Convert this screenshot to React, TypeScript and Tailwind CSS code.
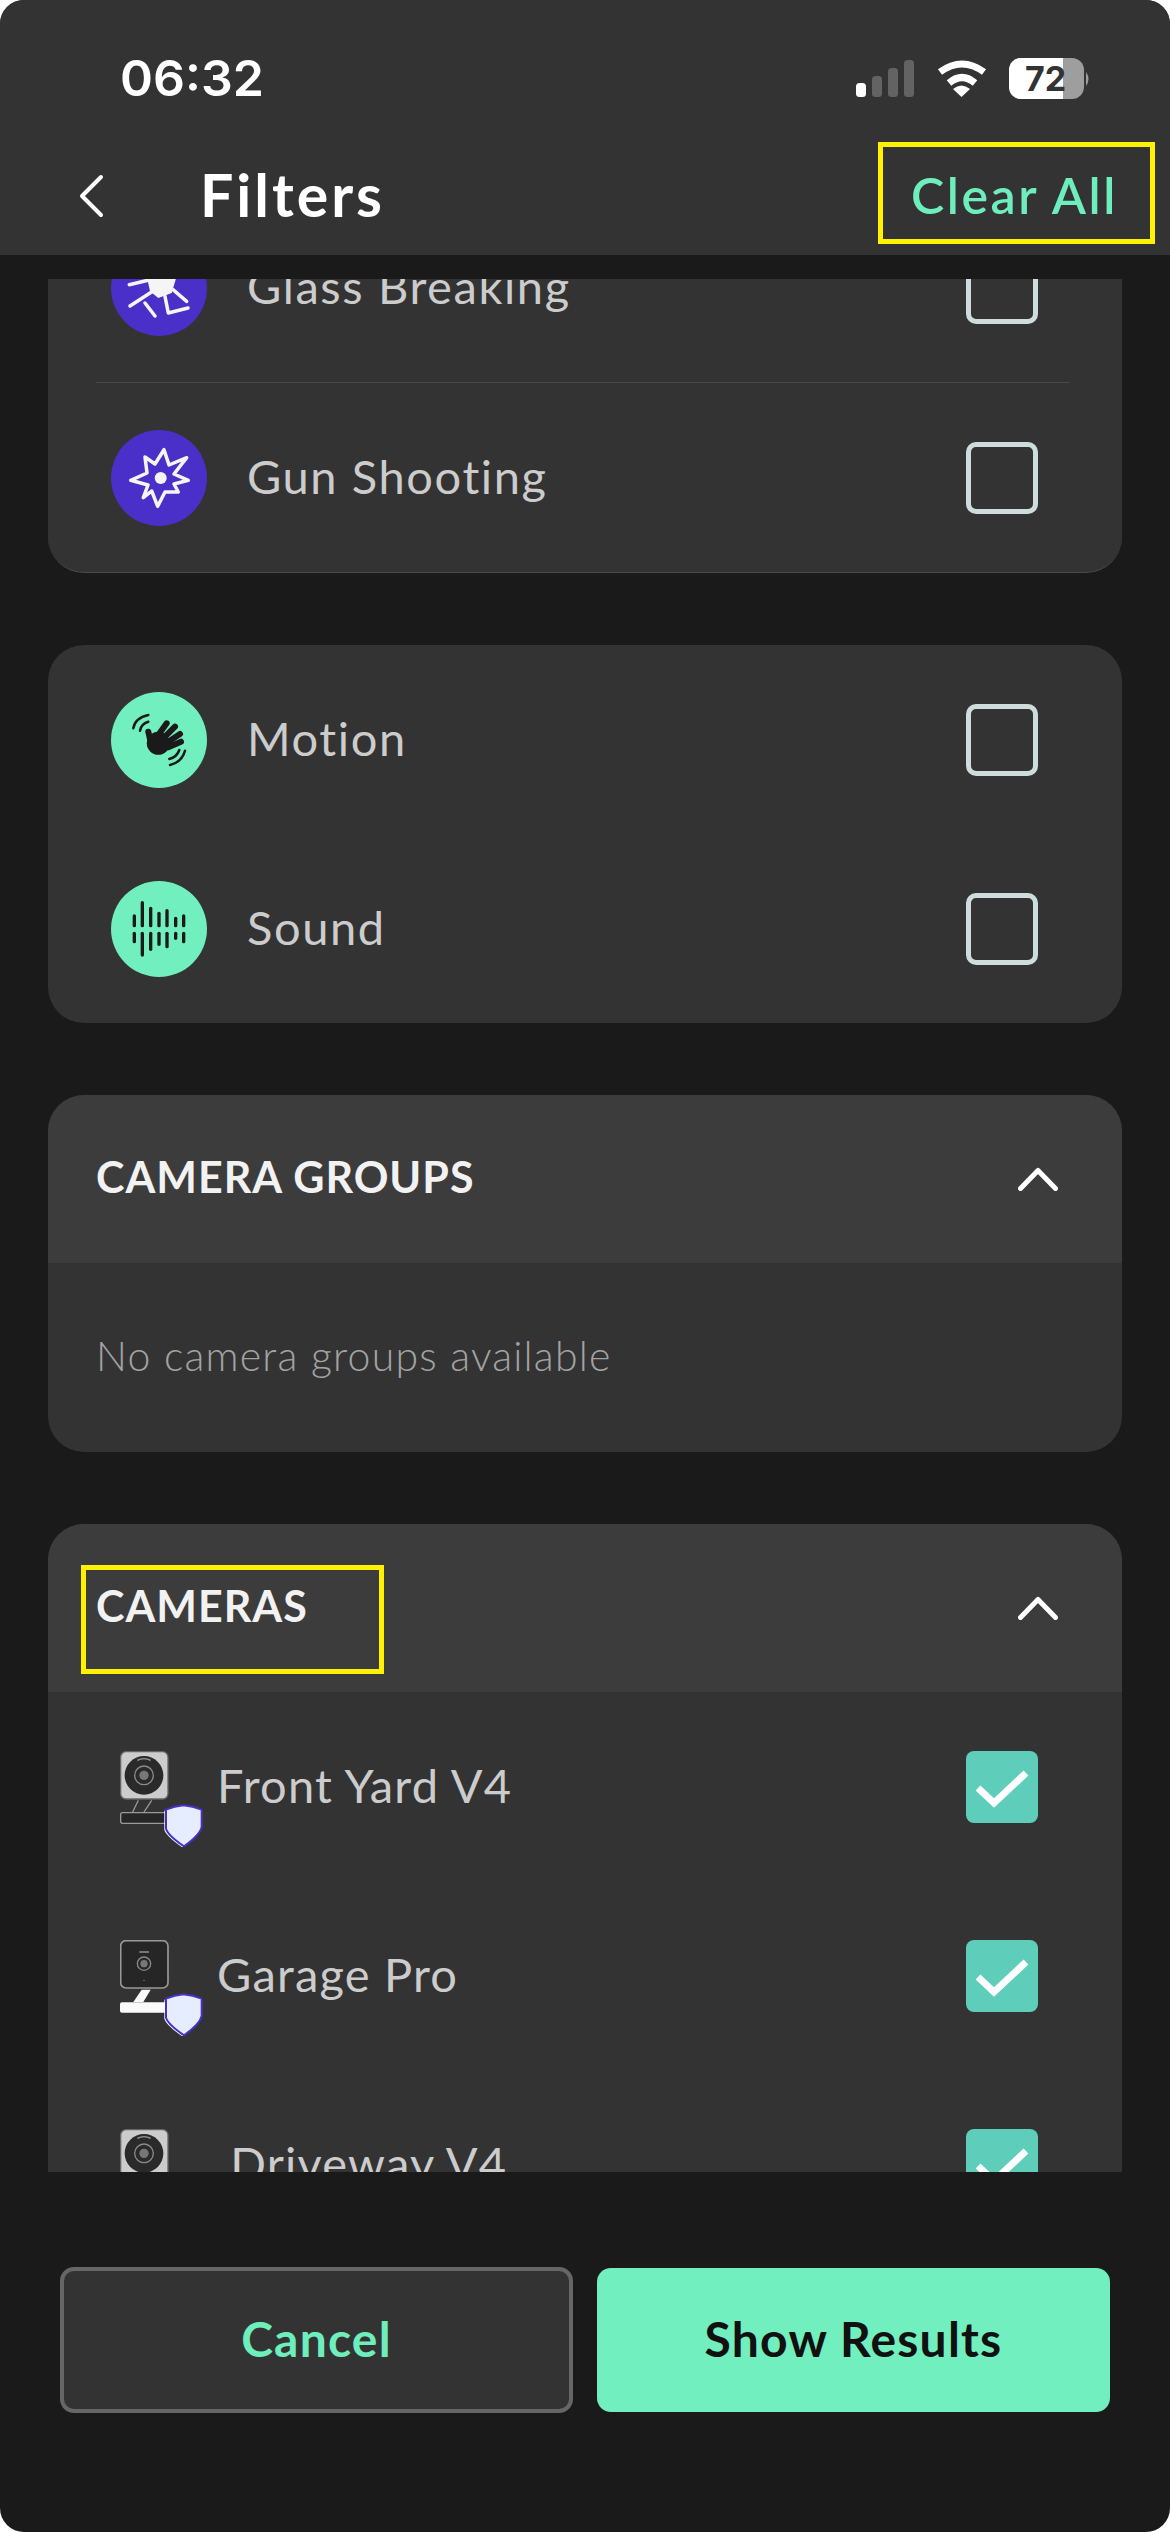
import type { ReactNode } from 'react';

const SHIELD = 'M190 163 Q218 165 245 176 L245 228 Q240 252 192 286 Q143 252 138 233 L138 176 Q164 165 190 163 Z';

const SOUND_BARS = [
  { x: 70, top: 105, bottom: 182 },
  { x: 94, top: 65, bottom: 222 },
  { x: 119, top: 82, bottom: 205 },
  { x: 144, top: 97, bottom: 190 },
  { x: 168, top: 89, bottom: 197 },
  { x: 194, top: 112, bottom: 172 },
  { x: 218, top: 105, bottom: 182 },
];

function StatusIcons() {
  return (
    <svg width="235" height="41" viewBox="0 0 235 41" className="shrink-0">
      <rect x="0" y="25" width="10" height="14" rx="3.5" fill="#fff" />
      <rect x="16" y="18" width="10" height="21" rx="3.5" fill="#636363" />
      <rect x="32" y="10" width="10" height="29" rx="3.5" fill="#636363" />
      <rect x="48" y="2" width="10" height="37" rx="3.5" fill="#636363" />
      <path d="M84 14 Q106 -2 128 14" stroke="#fff" strokeWidth="7" fill="none" />
      <path d="M93 25 Q106 14 119 25" stroke="#fff" strokeWidth="7" fill="none" />
      <path d="M97 31 Q105.5 24 114 31 L105.5 39 Z" fill="#fff" />
      <clipPath id="battery">
        <rect x="153" y="0" width="75" height="41" rx="12" />
      </clipPath>
      <g clipPath="url(#battery)">
        <rect x="153" y="0" width="75" height="41" fill="#9e9e9e" />
        <rect x="153" y="0" width="54" height="41" fill="#fff" />
      </g>
      <path d="M230 14 Q235 21 230 28 Z" fill="#9e9e9e" />
      <text x="189.5" y="33" textAnchor="middle" fontFamily="Inter, sans-serif" fontWeight="700" fontSize="34" fill="#333">
        72
      </text>
    </svg>
  );
}

function IconCircle({ color, children }: { color: string; children: ReactNode }) {
  return (
    <span className={`size-[96px] shrink-0 rounded-full ${color}`}>
      <svg viewBox="0 0 96 96" className="size-[96px]">
        {children}
      </svg>
    </span>
  );
}

function GlassIcon() {
  return (
    <IconCircle color="bg-[#4a30c8]">
      <g stroke="#f5f5f5" strokeWidth="3.5" strokeLinecap="round" strokeLinejoin="round" fill="none">
        <path d="M19 66 L44 49.7" />
        <path d="M34 63 L44 76" />
        <path d="M54 56.3 L57.3 73 L77 68" />
        <path d="M62 49.7 L75.7 61.3" />
        <path d="M18.3 44.7 L39 39.7" />
      </g>
      <path d="M35.7 36 L65.7 36 L60.7 53 L47.3 58 L39 51.3 Z" fill="#f5f5f5" />
    </IconCircle>
  );
}

function GunIcon() {
  return (
    <IconCircle color="bg-[#4a30c8]">
      <path
        d="M53 19.7 L58 35 L75.7 27.7 L63 44 L77.3 50.3 L63 54 L67.3 62 L54 62 L46.7 76.3 L40.7 61 L32.3 67.7 L37 55 L19.7 50.3 L36 43 L34 27 L44 34 Z"
        fill="none"
        stroke="#f5f5f5"
        strokeWidth="3.5"
        strokeLinejoin="round"
      />
      <circle cx="49.7" cy="48" r="6" fill="#f5f5f5" />
    </IconCircle>
  );
}

function MotionIcon() {
  return (
    <IconCircle color="bg-[#72efbf]">
      <g stroke="#1a1a1a" strokeLinecap="round" fill="none">
        <g strokeWidth="6">
          <path d="M37.3 39.7 L40 51.3" />
          <path d="M47.3 43 L55.7 31.3" />
          <path d="M52.3 46.3 L64 34.7" />
          <path d="M57.3 49.7 L69 42" />
          <path d="M57.3 55.3 L70 49.7" />
        </g>
        <g strokeWidth="2.5">
          <path d="M22.3 36.3 Q24 26 37.3 23" />
          <path d="M29 38.7 Q30 32 37.3 29.7" />
          <path d="M59 73 Q71 70 74 58.7" />
          <path d="M58.3 67 Q66 65 68.3 58" />
        </g>
      </g>
      <circle cx="47.3" cy="51.3" r="11.5" fill="#1a1a1a" />
    </IconCircle>
  );
}

function SoundIcon() {
  return (
    <span className="size-[96px] shrink-0 rounded-full bg-[#72efbf]">
      <svg viewBox="0 0 288 288" className="size-[96px]">
        <g stroke="#1a1a1a" strokeWidth="10" strokeLinecap="round">
          {SOUND_BARS.map((bar) => (
            <g key={bar.x}>
              <path d={`M${bar.x} ${bar.top} V134`} />
              <path d={`M${bar.x} 157 V${bar.bottom}`} />
            </g>
          ))}
        </g>
      </svg>
    </span>
  );
}

function Shield() {
  return (
    <>
      <path d={SHIELD} transform="translate(-5 3)" fill="#fff" />
      <path d={SHIELD} fill="#e6edff" stroke="#4530c8" strokeWidth="6" strokeLinejoin="round" />
    </>
  );
}

function CameraV4() {
  return (
    <svg viewBox="0 0 252 288" className="mt-[24px] h-[96px] w-[84px] shrink-0">
      <rect x="2" y="2" width="142" height="142" rx="16" fill="#cccccc" stroke="#666" strokeWidth="4" />
      <circle cx="72" cy="73" r="58" fill="#2a2a2a" />
      <circle cx="72" cy="73" r="28" fill="none" stroke="#8a8a8a" strokeWidth="4" />
      <circle cx="72" cy="73" r="14" fill="#777" />
      <path d="M52 28 Q72 18 92 28" fill="none" stroke="#999" strokeWidth="4" />
      <path d="M55 148 L38 183 M95 148 L72 183" stroke="#999" strokeWidth="4" />
      <rect x="2" y="185" width="140" height="32" rx="6" fill="#262626" stroke="#999" strokeWidth="4" />
      <Shield />
    </svg>
  );
}

function CameraPro() {
  return (
    <svg viewBox="0 0 252 288" className="mt-[24px] h-[96px] w-[84px] shrink-0">
      <rect x="2" y="2" width="142" height="142" rx="16" fill="#262626" stroke="#999" strokeWidth="5" />
      <path d="M58 36 H87" stroke="#888" strokeWidth="5" />
      <circle cx="72" cy="71" r="20" fill="none" stroke="#888" strokeWidth="4" />
      <circle cx="72" cy="71" r="11" fill="#777" />
      <circle cx="72" cy="121" r="2" fill="#888" />
      <path d="M65 149 H92 L70 186 H40 Z" fill="#fafafa" />
      <rect x="0" y="187" width="140" height="31" rx="6" fill="#fafafa" />
      <Shield />
    </svg>
  );
}

function Checkbox({ checked }: { checked?: boolean }) {
  if (checked) {
    return (
      <span className="size-[72px] shrink-0 rounded-[8px] bg-[#5ecdb9]">
        <svg viewBox="0 0 72 72" className="size-[72px]">
          <path d="M12 37 L28 52 L60 22" fill="none" stroke="#fff" strokeWidth="7" />
        </svg>
      </span>
    );
  }
  return <span className="size-[72px] shrink-0 rounded-[10px] border-[5px] border-[#cfdcdc]" />;
}

function FilterRow({ icon, label }: { icon: ReactNode; label: string }) {
  return (
    <div className="flex h-[189px] items-center pl-[63px] pr-[84px]">
      {icon}
      <span className="ml-[40px] flex-1 pb-[3px] text-[47px] tracking-[1.6px] text-[#cccccc]">{label}</span>
      <Checkbox />
    </div>
  );
}

function CameraRow({ icon, label }: { icon: ReactNode; label: string }) {
  return (
    <div className="flex h-[189px] items-center pl-[72px] pr-[84px]">
      {icon}
      <span className="ml-[13px] flex-1 whitespace-pre pb-[3px] text-[47px] tracking-[1.2px] text-[#cccccc]">{label}</span>
      <Checkbox checked />
    </div>
  );
}

function SectionHeader({ title, children }: { title: string; children?: ReactNode }) {
  return (
    <div className="relative flex h-[168px] items-center justify-between bg-[#3c3c3c] pl-[48px] pr-[64px]">
      <span className="pb-[3px] text-[43px] font-bold tracking-[1px] text-[#f2f2f2]">{title}</span>
      <svg width="40" height="24" viewBox="0 0 40 24" fill="none">
        <path d="M2.5 21.5 L20 3.5 L37.5 21.5" stroke="#fff" strokeWidth="5" strokeLinecap="round" strokeLinejoin="round" />
      </svg>
      {children}
    </div>
  );
}

export default function App() {
  return (
    <div className="relative flex h-[2532px] w-[1170px] flex-col overflow-hidden rounded-[24px] bg-[#1a1a1a] font-['Lato',sans-serif]">
      <header className="h-[255px] shrink-0 bg-[#333333]">
        <div className="flex h-[156px] items-center justify-between pl-[120px] pr-[79px]">
          <span className="font-['Inter',sans-serif] text-[50px] font-semibold text-white">06:32</span>
          <StatusIcons />
        </div>
        <div className="flex h-[82px] items-center pb-[3px] pl-[78px] pr-[52px]">
          <svg width="26" height="44" viewBox="0 0 26 44" fill="none">
            <path d="M23 3 L4 22 L23 41" stroke="#fff" strokeWidth="4" strokeLinecap="round" strokeLinejoin="round" />
          </svg>
          <h1 className="ml-[96px] flex-1 text-[59px] font-bold tracking-[3px] text-white">Filters</h1>
          <button className="text-[50px] font-semibold tracking-[2.6px] text-[#6eedbd]">Clear All</button>
        </div>
      </header>
      <div className="absolute left-[878px] top-[142px] h-[102px] w-[277px] border-[5px] border-[#fff200]" />

      <main className="mx-[48px] mt-[24px] h-[1893px] shrink-0 overflow-hidden">
        <div className="-mt-[86px] flex flex-col gap-[72px]">
          <section className="rounded-b-[36px] border-b border-[#4a4a4a] bg-[#333333]">
            <FilterRow icon={<GlassIcon />} label="Glass Breaking" />
            <div className="ml-[48px] mr-[52px] h-px bg-[#4a4a4a]" />
            <FilterRow icon={<GunIcon />} label="Gun Shooting" />
          </section>

          <section className="rounded-[36px] bg-[#333333]">
            <FilterRow icon={<MotionIcon />} label="Motion" />
            <FilterRow icon={<SoundIcon />} label="Sound" />
          </section>

          <section className="overflow-hidden rounded-[36px] bg-[#333333]">
            <SectionHeader title="CAMERA GROUPS" />
            <div className="flex h-[189px] items-center pb-[3px] pl-[48px] text-[41px] font-light tracking-[1.2px] text-[#a3a3a3]">
              No camera groups available
            </div>
          </section>

          <section className="overflow-hidden rounded-t-[36px] bg-[#333333]">
            <SectionHeader title="CAMERAS">
              <div className="absolute left-[33px] top-[41px] h-[109px] w-[303px] border-[5px] border-[#fff200]" />
            </SectionHeader>
            <CameraRow icon={<CameraV4 />} label="Front Yard V4" />
            <CameraRow icon={<CameraPro />} label="Garage Pro" />
            <CameraRow icon={<CameraV4 />} label=" Driveway V4" />
          </section>
        </div>
      </main>

      <footer className="flex items-center gap-[24px] px-[60px] pt-[95px]">
        <button className="h-[146px] w-[513px] rounded-[14px] border-[4px] border-[#666666] bg-[#333333] pb-[2px] text-[48px] font-bold tracking-[1.2px] text-[#6eedbd]">
          Cancel
        </button>
        <button className="h-[144px] w-[513px] rounded-[14px] bg-[#72efbf] pb-[2px] text-[48px] font-bold tracking-[1.2px] text-[#111111]">
          Show Results
        </button>
      </footer>
    </div>
  );
}
